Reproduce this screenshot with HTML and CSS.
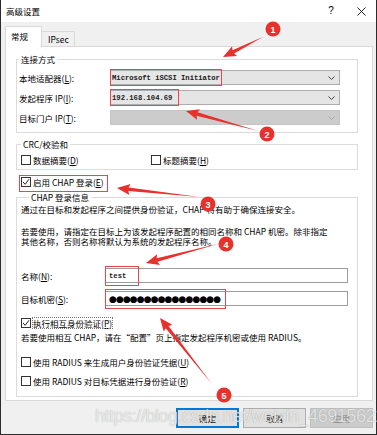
FILE: index.html
```html
<!DOCTYPE html>
<html lang="zh-CN">

<head>
    <meta charset="UTF-8">
    <meta name="viewport" content="width=device-width, initial-scale=1.0">
    <link rel="stylesheet" href="styles.css">
    <title>高级设置</title>
</head>

<body>
    <div class="dialogWindow">
        <div class="titleBar">
            <span class="titleBar_text">高级设置</span>
            <span class="titleBar_help">?</span>
            <span class="titleBar_close">
                <svg width="9" height="9" viewBox="0 0 9 9"><path d="M0.5 0.5 L8.5 8.5 M8.5 0.5 L0.5 8.5" stroke="#222" stroke-width="1" fill="none"/></svg>
            </span>
        </div>

        <div class="dialogContent">
            <div class="tabs">
                <div class="tab tabActive">常规</div>
                <div class="tab">IPsec</div>
            </div>

            <div class="tabPanel">
                <fieldset class="group groupConnection">
                    <legend>连接方式</legend>
                    <div class="groupConnection_row">
                        <label>本地适配器(<u>L</u>):</label>
                        <div class="combo">
                            <span class="fieldValue">Microsoft iSCSI Initiator</span>
                            <svg class="combo_arrow" width="7" height="4" viewBox="0 0 7 4"><path d="M0.5 0.5 L3.5 3.5 L6.5 0.5" stroke="#444" fill="none"/></svg>
                        </div>
                    </div>
                    <div class="groupConnection_row">
                        <label>发起程序 IP(<u>I</u>):</label>
                        <div class="combo">
                            <span class="fieldValue">192.168.104.69</span>
                            <svg class="combo_arrow" width="7" height="4" viewBox="0 0 7 4"><path d="M0.5 0.5 L3.5 3.5 L6.5 0.5" stroke="#444" fill="none"/></svg>
                        </div>
                    </div>
                    <div class="groupConnection_row">
                        <label>目标门户 IP(<u>T</u>):</label>
                        <div class="combo comboDisabled">
                            <span class="fieldValue"></span>
                            <svg class="combo_arrow" width="7" height="4" viewBox="0 0 7 4"><path d="M0.5 0.5 L3.5 3.5 L6.5 0.5" stroke="#a8a8a8" fill="none"/></svg>
                        </div>
                    </div>
                </fieldset>

                <fieldset class="group groupCrc">
                    <legend>CRC/校验和</legend>
                    <div class="groupCrc_row">
                        <label class="check groupCrc_first"><span class="check_box"></span>数据摘要(<u>D</u>)</label>
                        <label class="check"><span class="check_box"></span>标题摘要(<u>H</u>)</label>
                    </div>
                </fieldset>

                <label class="check chapEnable">
                    <span class="check_box">
                        <svg width="8" height="8" viewBox="0 0 8 8"><path d="M1 4 L3.2 6.3 L7 1.2" stroke="#222" stroke-width="1" fill="none"/></svg>
                    </span>启用 CHAP 登录(<u>E</u>)
                </label>

                <fieldset class="group groupChap">
                    <legend>CHAP 登录信息</legend>
                    <p class="groupChap_intro">通过在目标和发起程序之间提供身份验证，CHAP 将有助于确保连接安全。</p>
                    <p class="groupChap_usage">若要使用，请指定在目标上为该发起程序配置的相同名称和 CHAP 机密。除非指定<br>其他名称，否则名称将默认为系统的发起程序名称。</p>

                    <div class="groupChap_field fieldName">
                        <label>名称(<u>N</u>):</label>
                        <div class="textBox"><span class="fieldValue">test</span></div>
                    </div>
                    <div class="groupChap_field fieldSecret">
                        <label>目标机密(<u>S</u>):</label>
                        <div class="textBox"><span class="secretDots">●●●●●●●●●●●●●●●●</span></div>
                    </div>

                    <label class="check chapMutual">
                        <span class="check_box">
                            <svg width="8" height="8" viewBox="0 0 8 8"><path d="M1 4 L3.2 6.3 L7 1.2" stroke="#222" stroke-width="1" fill="none"/></svg>
                        </span><span class="chapMutual_text">执行相互身份验证(<u>P</u>)</span>
                    </label>
                    <p class="chapMutual_note">若要使用相互 CHAP，请在“配置”页上指定发起程序机密或使用 RADIUS。</p>

                    <label class="check radiusFirst"><span class="check_box"></span>使用 RADIUS 来生成用户身份验证凭据(<u>U</u>)</label>
                    <label class="check radiusSecond"><span class="check_box"></span>使用 RADIUS 对目标凭据进行身份验证(<u>R</u>)</label>
                </fieldset>
            </div>

            <div class="dialogButtons">
                <button class="dialogButton dialogButtonDefault">确定</button>
                <button class="dialogButton">取消</button>
                <button class="dialogButton dialogButtonDisabled">应用</button>
            </div>
        </div>
    </div>

    <div class="watermark">https://blog.csdn.net/weixin_46915621</div>

    <!-- anotacoes vermelhas por cima do dialogo -->
    <svg class="annotations" width="377" height="435" viewBox="0 0 377 435">
        <g fill="none" stroke="#e8484b" stroke-width="1">
            <rect x="110.5" y="69.5" width="111" height="16"/>
            <rect x="110.5" y="89.5" width="68" height="16"/>
            <rect x="19.5" y="175.5" width="88" height="16"/>
            <rect x="105.5" y="266.5" width="33" height="19"/>
            <rect x="105.5" y="289.5" width="120" height="19"/>
        </g>
        <g fill="#e8302c">
            <polygon transform="translate(223 57) rotate(-26.6)" points="0,0 13,-5.5 11.5,-1.8 45,0 11.5,1.8 13,5.5"/>
            <polygon transform="translate(186 111) rotate(15.5)" points="0,0 13,-5.5 11.5,-1.8 75,0 11.5,1.8 13,5.5"/>
            <polygon transform="translate(117 188) rotate(6.3)" points="0,0 13,-5.5 11.5,-1.8 83,0 11.5,1.8 13,5.5"/>
            <polygon transform="translate(146 263) rotate(-14.8)" points="0,0 13,-5.5 11.5,-1.8 75,0 11.5,1.8 13,5.5"/>
            <polygon transform="translate(160 318) rotate(51.8)" points="0,0 13,-5.5 11.5,-1.8 84,0 11.5,1.8 13,5.5"/>
        </g>
        <g class="annotations_badges">
            <circle cx="273" cy="29" r="7.5"/>
            <circle cx="267" cy="134" r="7.5"/>
            <circle cx="208" cy="204" r="7.5"/>
            <circle cx="226" cy="244" r="7.5"/>
            <circle cx="224" cy="395" r="7.5"/>
            <text x="273" y="32.5">1</text>
            <text x="267" y="137.5">2</text>
            <text x="208" y="207.5">3</text>
            <text x="226" y="247.5">4</text>
            <text x="224" y="398.5">5</text>
        </g>
    </svg>
</body>

</html>
```

FILE: styles.css
```css
body,
fieldset,
legend,
p {
    margin: 0;
    padding: 0;
}


body {
    font-family: "Noto Sans CJK SC", "Noto Sans", sans-serif;
    font-size: 8.5px;
    line-height: 10px;
    color: #000;
    background-color: #fff;
}

u {
    text-decoration-thickness: 1px;
    text-underline-offset: 1px;
}


.dialogWindow {
    width: 377px;
    height: 435px;
    box-sizing: border-box;
    border: 1px solid #2b2b2b;
    border-top: none;
    background-color: #f0f0f0;
    overflow: hidden;
}

.titleBar {
    display: flex;
    align-items: center;
    height: 22px;
    padding-left: 5px;
    background-color: #fff;
}

.titleBar_text {
    flex: 1;
}

.titleBar_help {
    width: 20px;
    margin-right: 5px;
    text-align: center;
    font-family: "Liberation Sans", sans-serif;
    font-size: 10px;
}

.titleBar_close {
    display: flex;
    justify-content: center;
    align-items: center;
    width: 30px;
    height: 22px;
}


.dialogContent {
    padding: 5px 3px 0 4px;
}

.tabs {
    position: relative;
    z-index: 1;
    display: flex;
    align-items: flex-end;
    height: 20px;
    margin-bottom: -1px;
}

.tab {
    box-sizing: border-box;
    height: 16px;
    width: 33px;
    padding-left: 6px;
    border: 1px solid #d9d9d9;
    border-left: none;
    background-color: #f0f0f0;
    line-height: 14px;
}

.tabActive {
    height: 21px;
    width: 37px;
    padding-left: 5px;
    border-left: 1px solid #d9d9d9;
    border-bottom: none;
    background-color: #fff;
    line-height: 19px;
}

.tabPanel {
    box-sizing: border-box;
    height: 355px;
    padding: 0 14px 0 10px;
    border: 1px solid #d9d9d9;
    background-color: #fff;
}


.group {
    border: 1px solid #dcdcdc;
    min-width: 0;
}

.group legend {
    padding: 0 2px;
    line-height: 10px;
}

/* Conexao */
.groupConnection {
    margin-top: 7px;
    padding: 6px 0 7px 2px;
    display: flex;
    flex-direction: column;
    gap: 5px;
}

.groupConnection_row {
    display: flex;
    align-items: center;
    height: 15px;
}

.groupConnection_row label {
    width: 91px;
}

.combo {
    display: flex;
    justify-content: space-between;
    align-items: center;
    box-sizing: border-box;
    width: 230px;
    height: 15px;
    padding: 0 4px 0 1px;
    border: 1px solid #adadad;
    background-color: #e5e5e5;
}

.comboDisabled {
    border-color: #c4c4c4;
    background-color: #cccccc;
}

.fieldValue {
    font-family: "Liberation Mono", monospace;
    font-size: 7.2px;
    font-weight: bold;
    color: #1a1a1a;
    white-space: pre;
}

/* CRC */
.groupCrc {
    margin-top: 6px;
    padding: 6px 0 4px 4px;
}

.groupCrc_row {
    display: flex;
    align-items: center;
    height: 10px;
}

.groupCrc_first {
    width: 130px;
}

.check {
    display: flex;
    align-items: center;
    height: 10px;
    white-space: nowrap;
}

.check_box {
    display: flex;
    justify-content: center;
    align-items: center;
    box-sizing: border-box;
    width: 10px;
    height: 10px;
    margin-right: 2px;
    border: 1px solid #333;
    background-color: #fff;
}

.chapEnable {
    margin-top: 7px;
    padding-left: 5px;
}

/* CHAP */
.groupChap {
    margin-top: 5px;
    padding: 2px 0 10px 4px;
}

.groupChap legend {
    margin-left: 8px;
}

.groupChap_usage {
    margin-top: 12px;
}

.groupChap_field {
    display: flex;
    align-items: center;
    height: 15px;
}

.groupChap_field label {
    width: 84px;
}

.fieldName {
    margin-top: 22px;
}

.fieldSecret {
    margin-top: 8px;
}

.textBox {
    display: flex;
    align-items: center;
    box-sizing: border-box;
    width: 243px;
    height: 15px;
    padding-left: 3px;
    border: 1px solid #9c9c9c;
    background-color: #fff;
}

.secretDots {
    font-family: "DejaVu Sans", sans-serif;
    font-size: 9px;
    letter-spacing: -0.9px;
}

.chapMutual {
    margin-top: 12px;
}

.chapMutual_text {
    outline: 1px dotted #777;
    outline-offset: 0;
}

.chapMutual_note {
    margin-top: 4px;
}

.radiusFirst {
    margin-top: 15px;
}

.radiusSecond {
    margin-top: 9px;
}


.dialogButtons {
    display: flex;
    justify-content: flex-end;
    gap: 4px;
    margin-top: 7px;
}

.dialogButton {
    box-sizing: border-box;
    width: 63px;
    height: 20px;
    padding: 0;
    border: 1px solid #adadad;
    background-color: #e1e1e1;
    font-family: inherit;
    font-size: 8.5px;
    color: #000;
}

.dialogButtonDefault {
    border: 1px solid #0078d7;
    box-shadow: inset 0 0 0 1px #0078d7;
}

.dialogButtonDisabled {
    border-color: #bfbfbf;
    background-color: #cccccc;
    color: #838383;
}


.watermark {
    position: absolute;
    left: 95px;
    top: 404px;
    font-family: "Liberation Sans", sans-serif;
    font-size: 18px;
    line-height: 24px;
    letter-spacing: -0.45px;
    color: rgba(255, 255, 255, 0.75);
    text-shadow: 0 0 1px rgba(0, 0, 0, 0.35);
    white-space: nowrap;
}

.annotations {
    position: absolute;
    left: 0;
    top: 0;
    pointer-events: none;
}

.annotations_badges circle {
    fill: #e8302c;
}

.annotations_badges text {
    fill: #fff;
    font-family: "Liberation Sans", sans-serif;
    font-size: 9px;
    font-weight: bold;
    text-anchor: middle;
}
```
